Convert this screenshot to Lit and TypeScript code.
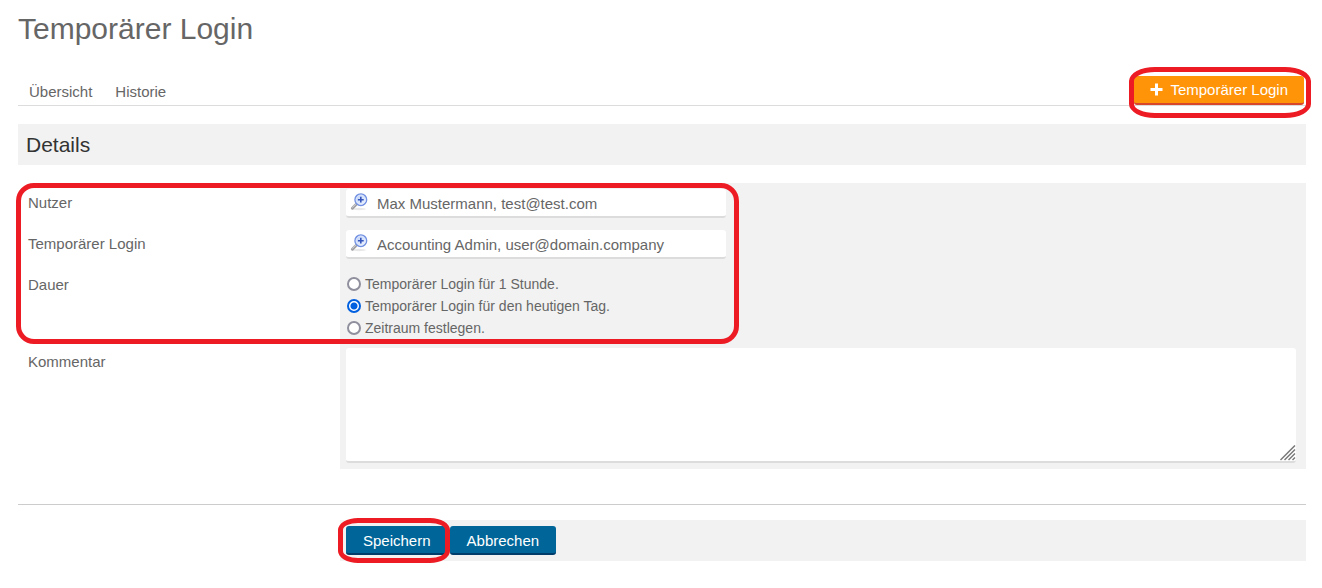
import { LitElement, html, css, svg } from "lit";
import { customElement, property, state } from "lit/decorators.js";

@customElement("lookup-field")
class LookupField extends LitElement {
  @property() value = "";
  @property() label = "";

  static styles = css`
    :host {
      display: block;
      max-width: 380px;
    }
    .box {
      display: flex;
      align-items: flex-start;
      height: 27px;
      background: #fff;
      border-radius: 3px;
      border-bottom: 2px solid #dcdcdc;
    }
    .lookup {
      flex: none;
      display: block;
      width: 18px;
      height: 18px;
      margin: 4px 9px 0 4px;
      padding: 0;
      border: 0;
      background: none;
      cursor: pointer;
    }
    .icon {
      display: block;
    }
    .text {
      box-sizing: border-box;
      flex: 1;
      min-width: 0;
      height: 27px;
      padding: 2px 0 0;
      border: 0;
      background: none;
      outline: none;
      color: #666;
      font: 15px "Liberation Sans", Arial, sans-serif;
    }
  `;

  render() {
    return html`
      <div class="box">
        <button class="lookup" type="button" aria-label="${this.label} suchen">
          <svg class="icon" width="18" height="18" viewBox="0 0 18 18">
            <defs>
              <linearGradient id="glass" x1="0" y1="0" x2="1" y2="1">
                <stop offset="0" stop-color="#b9cdf5" />
                <stop offset="1" stop-color="#f4f9ff" />
              </linearGradient>
            </defs>
            <ellipse cx="9" cy="16" rx="7" ry="1.2" fill="#000" opacity="0.09" />
            <path d="M2.4 15.2 L6.8 10.8" stroke="#a2a2a6" stroke-width="3" stroke-linecap="round" />
            <path d="M2.6 14.2 L6.6 10.2" stroke="#d4d4d8" stroke-width="1" stroke-linecap="round" />
            <circle cx="10.8" cy="6.7" r="5.8" fill="url(#glass)" stroke="#7391e2" stroke-width="1.5" />
            <circle cx="10.8" cy="6.7" r="4.7" fill="none" stroke="#dfe9ff" stroke-width="0.8" />
            <path d="M10.8 3.8 V9.6 M7.9 6.7 H13.7" stroke="#3555bd" stroke-width="1.6" />
          </svg>
        </button>
        <input class="text" type="text" aria-label=${this.label} .value=${this.value} />
      </div>
    `;
  }
}

@customElement("app-root")
class AppRoot extends LitElement {
  @state() private duration = "day";

  private options = [
    { id: "hour", text: "Temporärer Login für 1 Stunde." },
    { id: "day", text: "Temporärer Login für den heutigen Tag." },
    { id: "range", text: "Zeitraum festlegen." },
  ];

  static styles = css`
    :host {
      display: block;
      padding: 11px 16px 27px 18px;
      background: #fff;
      color: #666;
      font: 15px/22px "Liberation Sans", Arial, sans-serif;
    }
    .title {
      margin: 0;
      font-size: 30px;
      line-height: 36px;
      font-weight: 400;
    }
    .bar {
      display: flex;
      justify-content: space-between;
      align-items: flex-end;
      margin-top: 29px;
      border-bottom: 1px solid #dcdcdc;
    }
    .tabs {
      display: flex;
      gap: 23px;
      padding: 0 0 2px 11px;
    }
    .tab {
      color: inherit;
      text-decoration: none;
    }
    .marked {
      position: relative;
      display: flex;
    }
    .mark {
      position: absolute;
      border: 5px solid #ed1c24;
      pointer-events: none;
    }
    .mark-add {
      inset: -9px -5px -13px -5px;
      border-radius: 26px / 14px;
    }
    .mark-save {
      inset: -8px -2px -8px -8px;
      border-radius: 20px / 12px;
    }
    .mark-form {
      top: 0;
      bottom: -2px;
      left: -2px;
      width: 713px;
      border-radius: 18px;
    }
    .button {
      box-sizing: border-box;
      height: 29px;
      padding: 2px 17px 0;
      border: 0;
      border-bottom: 2px solid #003d6b;
      border-radius: 3px;
      background: #069;
      color: #fff;
      font: inherit;
      cursor: pointer;
    }
    .add {
      display: flex;
      align-items: center;
      gap: 7px;
      margin-right: 2px;
      padding: 0 16px;
      border-color: #d9472b;
      background: #ff9408;
    }
    .section {
      margin: 18px 0;
      padding: 0 8px;
      background: #f2f2f2;
      color: #333;
      font-size: 21px;
      line-height: 41px;
      font-weight: 400;
    }
    .group {
      position: relative;
    }
    .row {
      display: grid;
      grid-template-columns: 322px 1fr;
    }
    .label {
      padding: 9px 10px;
    }
    .cell {
      padding: 6px 10px 6px 6px;
      background: #f2f2f2;
    }
    .choices {
      padding: 8px 6px 3px;
    }
    .choice {
      display: flex;
      align-items: center;
      gap: 4px;
      font-size: 14px;
    }
    .radio {
      appearance: none;
      box-sizing: border-box;
      width: 14px;
      height: 14px;
      margin: 0 0 0 1px;
      border: 2px solid #8f8f9d;
      border-radius: 50%;
      background: #fff;
    }
    .radio:checked {
      border-color: #0060df;
      background: radial-gradient(circle, #0060df 3px, #fff 4px);
    }
    .comment {
      position: relative;
      display: flex;
    }
    .area {
      flex: 1;
      box-sizing: border-box;
      height: 115px;
      padding: 6px;
      border: 0;
      border-bottom: 2px solid #dcdcdc;
      border-radius: 3px;
      outline: none;
      resize: none;
      color: inherit;
      font: inherit;
    }
    .grip {
      position: absolute;
      right: 0;
      bottom: 2px;
    }
    .footer {
      margin-top: 35px;
      padding-top: 15px;
      border-top: 1px solid #ccc;
    }
    .actions {
      display: flex;
      gap: 2px;
      margin-left: 322px;
      padding: 6px;
      background: #f2f2f2;
    }
  `;

  render() {
    return html`
      <h1 class="title">Temporärer Login</h1>
      <div class="bar">
        <nav class="tabs">
          <a class="tab" href="#uebersicht">Übersicht</a>
          <a class="tab" href="#historie">Historie</a>
        </nav>
        <div class="marked">
          <button class="button add" type="button">
            <svg width="13" height="13" viewBox="0 0 13 13">
              <path d="M6.5 0.5 V12.5 M0.5 6.5 H12.5" stroke="#fff" stroke-width="3" />
            </svg>
            <span>Temporärer Login</span>
          </button>
          <span class="mark mark-add"></span>
        </div>
      </div>
      <h2 class="section">Details</h2>
      <form @submit=${(e: Event) => e.preventDefault()}>
        <div class="group">
          <div class="row">
            <div class="label">Nutzer</div>
            <div class="cell">
              <lookup-field label="Nutzer" value="Max Mustermann, test@test.com"></lookup-field>
            </div>
          </div>
          <div class="row">
            <div class="label">Temporärer Login</div>
            <div class="cell">
              <lookup-field label="Temporärer Login" value="Accounting Admin, user@domain.company"></lookup-field>
            </div>
          </div>
          <div class="row" role="radiogroup" aria-labelledby="duration">
            <div class="label" id="duration">Dauer</div>
            <div class="cell choices">
              ${this.options.map(
                (o) => html`
                  <label class="choice">
                    <input
                      class="radio"
                      type="radio"
                      name="duration"
                      .checked=${this.duration === o.id}
                      @change=${() => (this.duration = o.id)}
                    />
                    <span>${o.text}</span>
                  </label>
                `
              )}
            </div>
          </div>
          <span class="mark mark-form"></span>
        </div>
        <div class="row">
          <label class="label" for="comment">Kommentar</label>
          <div class="cell">
            <div class="comment">
              <textarea class="area" id="comment"></textarea>
              <svg class="grip" width="16" height="16" viewBox="0 0 16 16">
                ${[0.5, 4.5, 8.5, 12.5].map(
                  (x) => svg`<path d="M${x} 15 L15 ${x}" stroke="#777" stroke-width="1.5" />`
                )}
              </svg>
            </div>
          </div>
        </div>
        <div class="footer">
          <div class="actions">
            <div class="marked">
              <button class="button" type="submit">Speichern</button>
              <span class="mark mark-save"></span>
            </div>
            <button class="button" type="button">Abbrechen</button>
          </div>
        </div>
      </form>
    `;
  }
}
